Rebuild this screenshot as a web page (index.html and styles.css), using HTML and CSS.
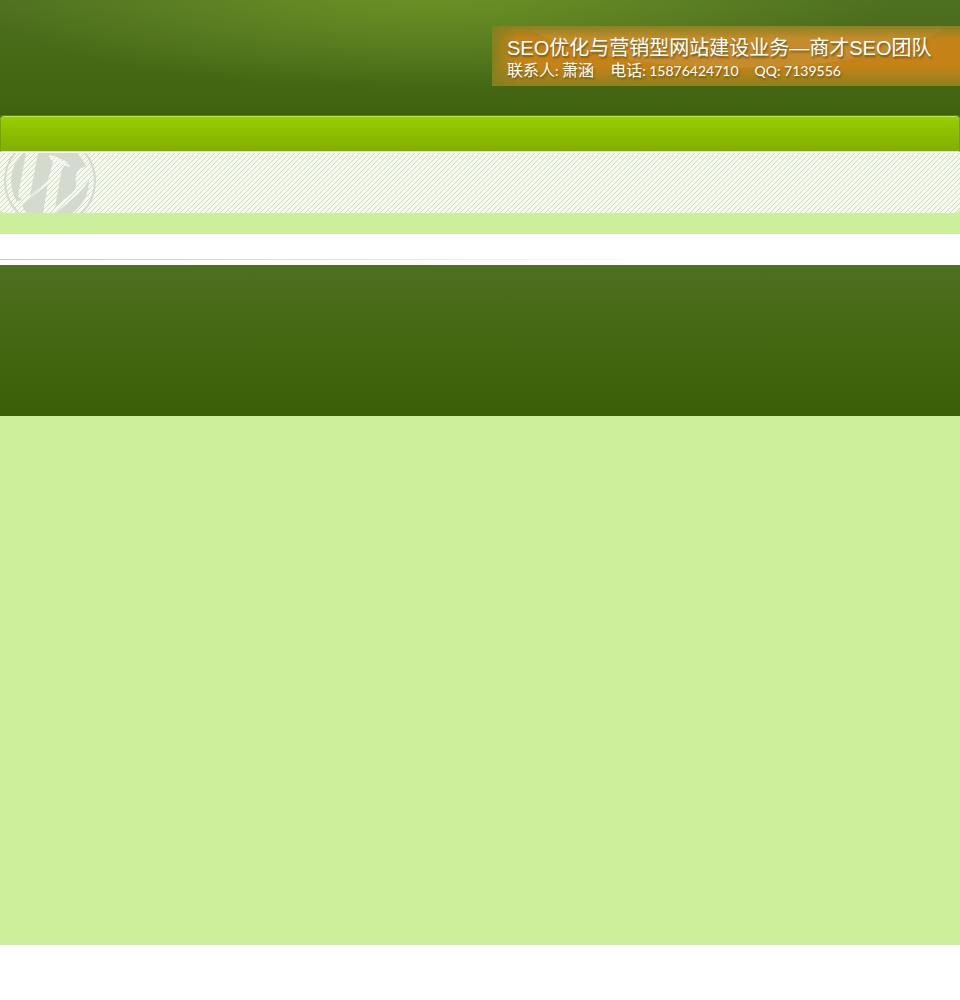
FILE: index.html
```html
<!DOCTYPE html>
<html lang="zh-CN">
<head>
<meta charset="utf-8">
<title>商才SEO团队</title>
<link rel="stylesheet" href="styles.css">
</head>
<body>
<div class="page">
  <header class="header">
    <div class="banner">
      <div class="banner-title">SEO优化与营销型网站建设业务—商才SEO团队</div>
      <div class="banner-contact">
        <span><span class="han">联系人</span>: <span class="han">萧涵</span></span>
        <span><span class="han">电话</span>: 15876424710</span>
        <span>QQ: 7139556</span>
      </div>
    </div>
  </header>
  <nav class="menu"></nav>
  <div class="intro">
    <svg class="emblem" viewBox="0 0 100 60" aria-hidden="true">
      <circle cx="50" cy="28" r="45" fill="none" stroke="#d3d8cd" stroke-width="2"/>
      <clipPath id="disc"><circle cx="50" cy="28" r="39"/></clipPath>
      <g clip-path="url(#disc)" fill="#d3d8cd">
        <path d="M10 0H26L18 43L22 47L12 50Z"/>
        <path d="M38 0H90V13Q80 14 77 19Q75 23 76 29Q77 35 72 40L55 54L62 16L68 9L52 2L49 4L53 9L48 27L30 43Z"/>
        <path d="M22 52L48 31L43 60H25Z"/>
        <path d="M56 60L78 41Q86 33 90 25V60Z"/>
      </g>
      <path d="M50 3L69 13" stroke="#f3f6ec" stroke-width="2" stroke-linecap="round"/>
    </svg>
  </div>
  <main class="content"><hr class="rule"></main>
  <footer class="footer"></footer>
</div>
</body>
</html>
```
FILE: styles.css
```css
* {
  box-sizing: border-box;
}

body {
  margin: 0;
  background: #fff;
  font-family: "Liberation Sans", "Noto Sans CJK SC", sans-serif;
}

.page {
  padding-bottom: 529px;
  background: #cdee9a;
}

.header {
  display: flex;
  justify-content: flex-end;
  padding: 26px 0 29px;
  background:
    radial-gradient(ellipse 460px 100px at 45% -10px, #6b9125 0%, #6b9125cc 25%, #6b912500 100%),
    linear-gradient(#4e7021, #3f630d);
}

.banner {
  width: 468px;
  padding: 10px 15px 4px;
  color: #fff;
  text-shadow: 1px 2px 2px #6b5a1c;
  background:
    linear-gradient(#84801fdd, #84801f00 22%, #84801f00 68%, #84801fdd),
    linear-gradient(90deg, #84801f, #84801f00 24px),
    radial-gradient(ellipse 228px 66px at 245px -24px, #c68c2c 99%, #c58217 100%);
}

.banner-title {
  font-size: 20px;
  line-height: 24px;
  white-space: nowrap;
}

.banner-contact {
  display: flex;
  align-items: baseline;
  gap: 16px;
  font-family: Lato, "Noto Sans CJK SC", sans-serif;
  font-size: 14px;
  line-height: 22px;
  white-space: nowrap;
}

.han {
  font-size: 16px;
  line-height: 16px;
}

.menu {
  height: 37px;
  border: 1px solid #76a207;
  border-top-color: #578008;
  border-bottom-color: #d9e5be;
  border-radius: 5px 5px 0 0;
  background: linear-gradient(#98cf00, #82ae00);
  box-shadow: inset 0 1px #c0e35c, 0 -4px #3e620c;
}

.intro {
  height: 61px;
  border-top: 1px solid #fff;
  border-radius: 0 0 5px 5px;
  overflow: hidden;
  background: #f6f9f0 url("data:image/svg+xml,%3Csvg xmlns='http://www.w3.org/2000/svg' width='5' height='5' shape-rendering='crispEdges'%3E%3Cpath fill='%23cddac0' d='M4 0h1v1h-1zM3 1h1v1h-1zM2 2h1v1h-1zM1 3h1v1h-1zM0 4h1v1h-1z'/%3E%3C/svg%3E");
}

.emblem {
  display: block;
  width: 100px;
  height: 60px;
  opacity: 0.95;
}

.content {
  margin-top: 21px;
  padding: 25px 0 5px;
  background: #fff;
}

.rule {
  width: 100%;
  height: 1px;
  margin: 0;
  border: 0;
  background: linear-gradient(90deg, #ccc, #dedfd0 300px, #fff 670px);
}

.footer {
  height: 151px;
  background: linear-gradient(#4e7021, #3e620a 80%, #3b5f09);
}
```
